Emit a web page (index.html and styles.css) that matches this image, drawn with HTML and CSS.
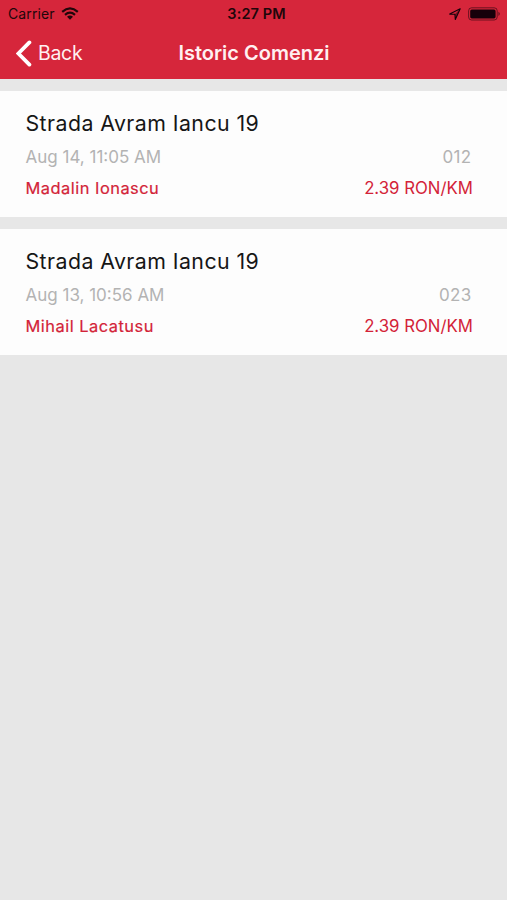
FILE: index.html
```html
<!DOCTYPE html>
<html lang="ro">
<head>
<meta charset="utf-8">
<title>Istoric Comenzi</title>
<link rel="stylesheet" href="styles.css">
</head>
<body>
<header class="header">
  <div class="status">
    <div class="carrier"><span>Carrier</span>
      <svg width="18" height="13" viewBox="0 0 18 13"><g fill="none" stroke="currentColor" stroke-width="2.2"><path d="M1.2 4.8Q9-2 16.8 4.8"/><path d="M4 7.8Q9 3.5 14 7.8"/></g><path d="M6 9.7Q9 7.2 12 9.7L9 12.8Z" fill="currentColor"/></svg>
    </div>
    <span class="time">3:27 PM</span>
    <div class="indicators">
      <svg width="12" height="12" viewBox="0 0 12 12"><path d="M.7 6.1 11.2.8 6.3 11.4 5.9 6.2Z" fill="none" stroke="currentColor" stroke-width="1.1" stroke-linejoin="round"/><path d="M11.2.8 6.3 11.4 5.9 6.2Z" fill="currentColor" opacity=".5"/></svg>
      <svg width="34" height="14" viewBox="0 0 34 14"><rect x=".6" y=".8" width="28.6" height="12.2" rx="3" fill="none" stroke="currentColor" opacity=".55"/><rect x="2.2" y="2.4" width="25.4" height="9" rx="1.6" fill="currentColor"/><path d="M30.4 4.8q3 2.1 0 4.2Z" fill="currentColor" opacity=".55"/></svg>
    </div>
  </div>
  <nav class="nav">
    <a class="back"><svg width="16" height="27" viewBox="0 0 16 27"><path d="M13.4 2.4 2.4 13.5l11 11.1" fill="none" stroke="currentColor" stroke-width="3.8" stroke-linecap="round"/></svg><span>Back</span></a>
    <h1 class="title">Istoric Comenzi</h1>
  </nav>
</header>
<main class="orders">
  <article class="card">
    <h2 class="address">Strada Avram Iancu 19</h2>
    <div class="row meta"><span class="date">Aug 14, 11:05 AM</span><span class="code">012</span></div>
    <div class="row detail"><span class="driver">Madalin Ionascu</span><span class="price">2.39 RON/KM</span></div>
  </article>
  <article class="card">
    <h2 class="address">Strada Avram Iancu 19</h2>
    <div class="row meta"><span class="date">Aug 13, 10:56 AM</span><span class="code">023</span></div>
    <div class="row detail"><span class="driver">Mihail Lacatusu</span><span class="price">2.39 RON/KM</span></div>
  </article>
</main>
</body>
</html>
```
FILE: styles.css
```css
* { box-sizing: border-box; }
body { margin: 0; min-height: 100vh; background: #e7e7e7; font-family: Inter, "Liberation Sans", sans-serif; }
svg { display: block; flex: none; }
h1, h2 { margin: 0; }
.header { height: 79px; background: #d6263b; }
.status { height: 27px; padding: 0 5px 0 8px; display: grid; grid-template-columns: 1fr auto 1fr; align-items: center; color: #21060a; font-size: 14px; line-height: 27px; }
.carrier { display: flex; align-items: center; gap: 6px; letter-spacing: .1px; }
.time { padding-left: 3px; font-weight: 600; font-size: 14.5px; letter-spacing: .1px; }
.indicators { display: flex; justify-content: flex-end; align-items: center; gap: 7px; color: #16000a; }
.nav { height: 52px; padding: 0 16px; display: grid; grid-template-columns: 1fr auto 1fr; align-items: center; color: #fff0f1; }
.back { display: flex; align-items: center; gap: 6px; font-size: 19.5px; letter-spacing: -.3px; }
.back svg { color: #fff; }
.title { padding-left: 1px; font-size: 20px; font-weight: 600; white-space: nowrap; }
.orders { padding-top: 12px; display: flex; flex-direction: column; gap: 12px; }
.card { height: 126px; padding: 17px 34px 0 25.5px; background: #fdfdfd; }
.address { font-size: 21.3px; line-height: 30px; font-weight: 400; letter-spacing: .45px; color: #161616; white-space: nowrap; }
.row { display: flex; justify-content: space-between; line-height: 31px; white-space: nowrap; }
.meta { margin-top: 4px; padding-right: 1.5px; font-size: 17px; color: #b3b3b3; }
.code { letter-spacing: .3px; }
.detail { color: #d32338; font-size: 16.8px; }
.driver { font-size: 16.4px; letter-spacing: .5px; -webkit-text-stroke: .2px currentColor; }
```
